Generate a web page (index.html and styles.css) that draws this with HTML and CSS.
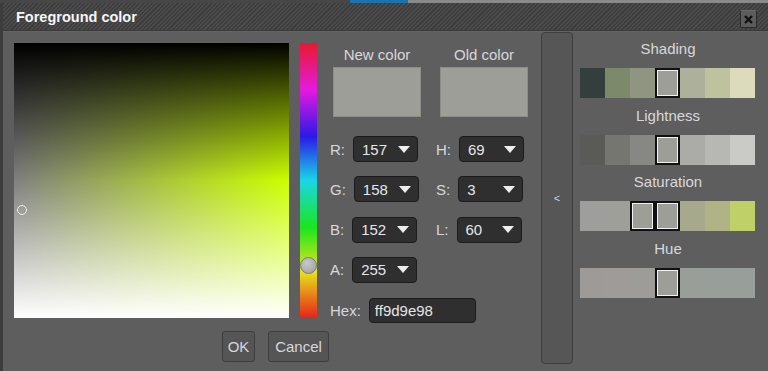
FILE: index.html
```
<!DOCTYPE html>
<html>

<head>
    <meta charset="utf-8" />
    <title>Foreground color</title>
    <link rel="stylesheet" href="styles.css">
</head>

<body>
    <div class="backdrop"><span class="backdrop-tab"></span><span class="backdrop-rest"></span></div>
    <div id="dialog">
        <div class="titlebar">
            <span class="title">Foreground color</span>
            <button class="close">
                <svg width="9" height="9" viewBox="0 0 9 9"><path d="M1 1L8 8M8 1L1 8" stroke="#111" stroke-width="2.4" /></svg>
            </button>
        </div>
        <div class="content">
            <div class="main">
                <div class="pickers">
                    <div class="sv"><span class="sv-handle"></span></div>
                    <div class="hue"><span class="hue-handle"></span></div>
                    <div class="controls">
                        <div class="previews">
                            <div class="preview">
                                <div class="preview-label">New color</div>
                                <div class="preview-swatch"></div>
                            </div>
                            <div class="preview">
                                <div class="preview-label">Old color</div>
                                <div class="preview-swatch"></div>
                            </div>
                        </div>
                        <div class="fields">
                            <div class="field"><label>R:</label><div class="select"><span>157</span><i class="arrow"></i></div></div>
                            <div class="field"><label>H:</label><div class="select"><span>69</span><i class="arrow"></i></div></div>
                            <div class="field"><label>G:</label><div class="select"><span>158</span><i class="arrow"></i></div></div>
                            <div class="field"><label>S:</label><div class="select"><span>3</span><i class="arrow"></i></div></div>
                            <div class="field"><label>B:</label><div class="select"><span>152</span><i class="arrow"></i></div></div>
                            <div class="field"><label>L:</label><div class="select"><span>60</span><i class="arrow"></i></div></div>
                            <div class="field"><label>A:</label><div class="select"><span>255</span><i class="arrow"></i></div></div>
                            <div class="field"></div>
                            <div class="field hex"><label>Hex:</label><input type="text" value="ff9d9e98" /></div>
                        </div>
                    </div>
                </div>
                <div class="actions">
                    <button class="btn btn-ok">OK</button>
                    <button class="btn btn-cancel">Cancel</button>
                </div>
            </div>
            <div class="collapse">&lt;</div>
            <div class="variations">
                <div class="group">
                    <div class="group-label">Shading</div>
                    <div class="swatches">
                        <span style="background:#343f3d"></span>
                        <span style="background:#7c8a6b"></span>
                        <span style="background:#8f9580"></span>
                        <span class="picked" style="background:#9d9e98"></span>
                        <span style="background:#adb09b"></span>
                        <span style="background:#bec29f"></span>
                        <span style="background:#dcdcbd"></span>
                    </div>
                </div>
                <div class="group">
                    <div class="group-label">Lightness</div>
                    <div class="swatches">
                        <span style="background:#5a5b56"></span>
                        <span style="background:#757670"></span>
                        <span style="background:#878883"></span>
                        <span class="picked" style="background:#9d9e98"></span>
                        <span style="background:#abaca8"></span>
                        <span style="background:#b7b8b4"></span>
                        <span style="background:#cacbc6"></span>
                    </div>
                </div>
                <div class="group">
                    <div class="group-label">Saturation</div>
                    <div class="swatches">
                        <span style="background:#9e9e9d"></span>
                        <span style="background:#9f9f9a"></span>
                        <span class="picked" style="background:#9e9e98"></span>
                        <span class="picked" style="background:#9d9e98"></span>
                        <span style="background:#a7a98c"></span>
                        <span style="background:#afb386"></span>
                        <span style="background:#c0d068"></span>
                    </div>
                </div>
                <div class="group">
                    <div class="group-label">Hue</div>
                    <div class="swatches">
                        <span style="background:#9e9a98"></span>
                        <span style="background:#9e9b98"></span>
                        <span style="background:#9d9c98"></span>
                        <span class="picked" style="background:#9d9e98"></span>
                        <span style="background:#999e98"></span>
                        <span style="background:#989e99"></span>
                        <span style="background:#989e9a"></span>
                    </div>
                </div>
            </div>
        </div>
    </div>
</body>

</html>
```

FILE: styles.css
```
html {
    margin: 0px;
    padding: 0px;
}

body {
    font-family: 'Liberation Sans', 'Arial', sans-serif;
    font-size: 15px;
    margin: 0px;
    padding: 0px;
    width: 768px;
    height: 371px;
    overflow: hidden;
    color: #d6d8dc;
    background-color: #5e5e5e;
}

.backdrop {
    height: 3px;
    display: flex;
    background-color: #474747;
}

.backdrop-tab {
    margin-left: 350px;
    width: 58px;
    background-color: #1b72ad;
}

.backdrop-rest {
    flex: 1;
    background-color: #8a8a8a;
}

#dialog {
    border-left: 3px solid #3c3c3c;
    height: 368px;
    display: flex;
    flex-direction: column;
}

.titlebar {
    height: 27px;
    display: flex;
    align-items: center;
    justify-content: space-between;
    padding-left: 13px;
    padding-right: 11px;
    border-bottom: 1px solid #3a3a3a;
    background: repeating-linear-gradient(135deg, #3e3e3e 0px, #3e3e3e 1.5px, #4b4b4b 1.5px, #4b4b4b 3px);
}

.title {
    font-size: 14.5px;
    font-weight: bold;
    color: #f4f6fa;
    margin-top: 1px;
}

.close {
    width: 17px;
    height: 18px;
    margin-top: 5px;
    padding: 0px;
    display: flex;
    align-items: center;
    justify-content: center;
    background-color: #5c5c5c;
    border: 1px solid #2a2a2a;
    border-top-color: #6a6a6a;
    border-radius: 2px;
}

.content {
    flex: 1;
    display: flex;
    border-top: 1px solid #646464;
}

.main {
    width: 537px;
    padding-top: 11px;
    padding-left: 11px;
    box-sizing: border-box;
}

.pickers {
    display: flex;
    height: 275px;
}

.sv {
    width: 275px;
    height: 275px;
    position: relative;
    background:
        linear-gradient(to bottom, #000 0%, rgba(0, 0, 0, 0) 50%, rgba(255, 255, 255, 0) 50%, #fff 100%),
        linear-gradient(to right, #808080, #ccff00);
}

.sv-handle {
    position: absolute;
    left: 3px;
    top: 162px;
    width: 8px;
    height: 8px;
    border: 1.5px solid #eee;
    border-radius: 50%;
}

.hue {
    width: 17px;
    height: 275px;
    margin-left: 11px;
    position: relative;
    background: linear-gradient(to bottom, #e8192c 0%, #e619e0 17%, #2a19e6 34%, #19d6e6 50%, #19e61e 67%, #e6e619 83%, #e6231a 100%);
}

.hue-handle {
    position: absolute;
    left: 0px;
    top: 214px;
    width: 15px;
    height: 15px;
    border: 1px solid #7a7a7a;
    border-radius: 50%;
    background: radial-gradient(circle at 40% 35%, #c8c8c8, #9c9c9c);
}

.controls {
    margin-left: 13px;
    width: 200px;
}

.previews {
    display: flex;
    gap: 19px;
    margin-left: 3px;
    margin-top: 2px;
}

.preview {
    width: 88px;
}

.preview-label {
    text-align: center;
    line-height: 20px;
    margin-bottom: 2px;
}

.preview-swatch {
    height: 48px;
    background-color: #9d9e98;
    border: 1px solid #8c8d88;
}

.fields {
    display: grid;
    grid-template-columns: 106px auto;
    row-gap: 14.25px;
    margin-top: 19px;
}

.field {
    display: flex;
    align-items: center;
    height: 26px;
}

.field label {
    margin-right: 8px;
}

.select {
    height: 24px;
    width: 48px;
    display: flex;
    align-items: center;
    justify-content: space-between;
    padding: 0px 7px 0px 8px;
    color: #e4e6ea;
    background-color: #2f2f2f;
    border: 1px solid #1b1b1b;
    border-radius: 4px;
}

.arrow {
    width: 0px;
    height: 0px;
    border-left: 6px solid transparent;
    border-right: 6px solid transparent;
    border-top: 7px solid #eeeeee;
}

.hex {
    grid-column: 1 / 3;
}

.hex input {
    width: 107px;
    height: 25px;
    box-sizing: border-box;
    padding: 0px 5px;
    font-family: inherit;
    font-size: 15px;
    color: #e4e6ea;
    background-color: #2f2f2f;
    border: 1px solid #1b1b1b;
    border-radius: 4px;
}

.actions {
    display: flex;
    gap: 13px;
    margin-top: 13px;
    margin-left: 208px;
}

.btn {
    height: 31px;
    padding: 0px;
    font-family: inherit;
    font-size: 15px;
    color: #d6d8dc;
    background-color: #555;
    border: 1px solid #3e3e3e;
    border-radius: 3px;
}

.btn-ok {
    width: 33px;
}

.btn-cancel {
    width: 61px;
}

.collapse {
    width: 30px;
    height: 330px;
    margin-left: 1px;
    display: flex;
    align-items: center;
    justify-content: center;
    font-size: 11px;
    color: #cfd2d6;
    background-color: #565656;
    border: 1px solid #3f3f3f;
    border-radius: 4px;
}

.variations {
    padding-top: 8px;
    padding-left: 7px;
    width: 176px;
}

.group {
    margin-bottom: 8.5px;
}

.group-label {
    text-align: center;
    line-height: 18px;
    margin-bottom: 10px;
}

.swatches {
    display: flex;
    height: 30px;
}

.swatches span {
    width: 25px;
    box-sizing: border-box;
}

.swatches .picked {
    border: 2px solid #111;
    box-shadow: inset 0 0 0 1px #f2f2f2;
}
```
